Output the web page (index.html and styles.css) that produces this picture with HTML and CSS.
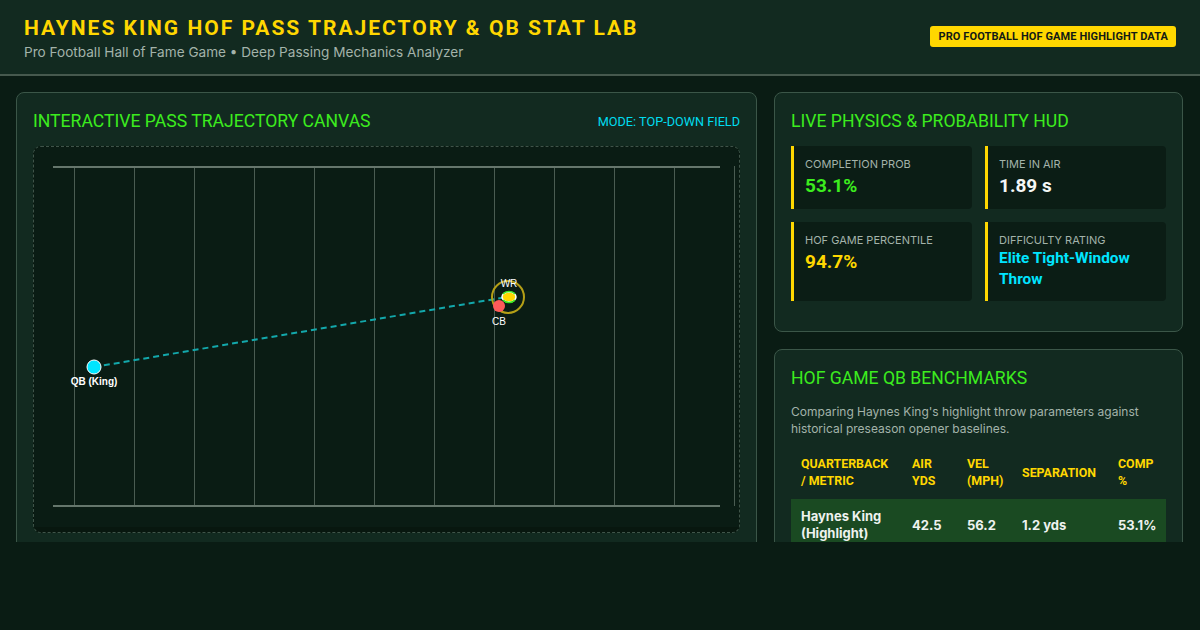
FILE: index.html
```html
<!DOCTYPE html>
<html lang="en">
<head>
<meta charset="utf-8">
<title>Haynes King HOF Pass Trajectory &amp; QB Stat Lab</title>
<link rel="stylesheet" href="styles.css">
</head>
<body>
<header class="top">
  <div class="brand">
    <h1 class="title">HAYNES KING HOF PASS TRAJECTORY &amp; QB STAT LAB</h1>
    <p class="subtitle">Pro Football Hall of Fame Game • Deep Passing Mechanics Analyzer</p>
  </div>
  <span class="badge">PRO FOOTBALL HOF GAME HIGHLIGHT DATA</span>
</header>
<main class="layout">
  <section class="panel canvas-panel">
    <div class="panel-head">
      <h2 class="panel-title">INTERACTIVE PASS TRAJECTORY CANVAS</h2>
      <span class="mode">MODE: TOP-DOWN FIELD</span>
    </div>
    <div class="canvas-box">
      <svg class="field" width="706" height="380" viewBox="0 0 706 380">
        <g stroke="#4a5c52" stroke-width="1">
          <line x1="40.5" y1="19" x2="40.5" y2="359"/>
          <line x1="100.5" y1="19" x2="100.5" y2="359"/>
          <line x1="160.5" y1="19" x2="160.5" y2="359"/>
          <line x1="220.5" y1="19" x2="220.5" y2="359"/>
          <line x1="280.5" y1="19" x2="280.5" y2="359"/>
          <line x1="340.5" y1="19" x2="340.5" y2="359"/>
          <line x1="400.5" y1="19" x2="400.5" y2="359"/>
          <line x1="460.5" y1="19" x2="460.5" y2="359"/>
          <line x1="520.5" y1="19" x2="520.5" y2="359"/>
          <line x1="580.5" y1="19" x2="580.5" y2="359"/>
          <line x1="640.5" y1="19" x2="640.5" y2="359"/>
          <line x1="700.5" y1="19" x2="700.5" y2="359"/>
        </g>
        <g stroke="#65766c" stroke-width="2">
          <line x1="19" y1="20" x2="686" y2="20"/>
          <line x1="19" y1="359" x2="686" y2="359"/>
        </g>
        <line x1="60" y1="220" x2="473" y2="150" stroke="#13a8ab" stroke-width="2" stroke-dasharray="6 4"/>
        <circle cx="474" cy="150" r="16" fill="none" stroke="#b49f16" stroke-width="2"/>
        <ellipse cx="475" cy="150" rx="7" ry="5" fill="#ffd700" stroke="#ffffff" stroke-width="1.5"/>
        <path d="M469 147 A7 5 0 0 1 481 147" fill="none" stroke="#39e61a" stroke-width="1.5"/>
        <path d="M469 153 A7 5 0 0 0 481 153" fill="none" stroke="#39e61a" stroke-width="1.5"/>
        <circle cx="465" cy="159" r="6" fill="#ff5a5a"/>
        <circle cx="60" cy="220" r="7" fill="#00e5ff" stroke="#ffffff" stroke-width="1"/>
        <g class="lbl">
          <text x="475" y="140" text-anchor="middle">WR</text>
          <text x="465" y="178" text-anchor="middle">CB</text>
          <text class="qb" x="60" y="238" text-anchor="middle">QB (King)</text>
        </g>
      </svg>
    </div>
  </section>
  <div class="side">
    <section class="panel">
      <h2 class="panel-title">LIVE PHYSICS &amp; PROBABILITY HUD</h2>
      <div class="stats">
        <div class="stat">
          <div class="stat-label">COMPLETION PROB</div>
          <div class="stat-value green">53.1%</div>
        </div>
        <div class="stat">
          <div class="stat-label">TIME IN AIR</div>
          <div class="stat-value white">1.89 s</div>
        </div>
        <div class="stat">
          <div class="stat-label">HOF GAME PERCENTILE</div>
          <div class="stat-value yellow">94.7%</div>
        </div>
        <div class="stat">
          <div class="stat-label">DIFFICULTY RATING</div>
          <div class="stat-value cyan small">Elite Tight-Window Throw</div>
        </div>
      </div>
    </section>
    <section class="panel">
      <h2 class="panel-title">HOF GAME QB BENCHMARKS</h2>
      <p class="desc">Comparing Haynes King's highlight throw parameters against historical preseason opener baselines.</p>
      <table class="bench">
        <colgroup>
          <col class="c1"><col class="c2"><col class="c3"><col class="c4"><col class="c5">
        </colgroup>
        <thead>
          <tr><th>QUARTERBACK / METRIC</th><th>AIR YDS</th><th>VEL (MPH)</th><th>SEPARATION</th><th>COMP %</th></tr>
        </thead>
        <tbody>
          <tr class="hl"><td>Haynes King (Highlight)</td><td>42.5</td><td>56.2</td><td>1.2 yds</td><td>53.1%</td></tr>
        </tbody>
      </table>
    </section>
  </div>
</main>
</body>
</html>
```
FILE: styles.css
```css
* { box-sizing: border-box; }
html, body { margin: 0; padding: 0; }
body {
  background: #0a1c14;
  font-family: Inter, "Noto Sans", sans-serif;
  color: #e8eee9;
  width: 1200px;
  height: 630px;
  overflow: hidden;
}
.top {
  background: #122a20;
  border-bottom: 2px solid #46594e;
  height: 76px;
  padding: 15px 24px 0 24px;
  display: flex;
  justify-content: space-between;
  align-items: flex-start;
}
.title {
  margin: 0;
  font-family: Roboto, sans-serif;
  font-weight: 700;
  font-size: 21px;
  line-height: 26px;
  letter-spacing: 2px;
  color: #ffd700;
}
.subtitle {
  margin: 2px 0 0 0;
  font-size: 13.6px;
  line-height: 18px;
  color: #a3b3aa;
}
.badge {
  margin-top: 11px;
  background: #ffd700;
  color: #121a14;
  font-family: Roboto, sans-serif;
  font-weight: 700;
  font-size: 11px;
  line-height: 21px;
  height: 21px;
  padding: 0 8px;
  letter-spacing: 0.1px;
  border-radius: 3px;
}
.layout {
  height: 466px;
  overflow: hidden;
  padding: 16px 16px 0 16px;
  display: grid;
  grid-template-columns: 741px 409px;
  column-gap: 17px;
  align-items: start;
}
.panel {
  background: #122a20;
  border: 1px solid #3b5648;
  border-radius: 8px;
  padding: 16px;
}
.panel-head {
  display: flex;
  justify-content: space-between;
  align-items: center;
}
.panel-title {
  margin: 0 0 13px 0;
  font-family: Roboto, sans-serif;
  font-weight: 400;
  font-size: 17.6px;
  line-height: 24px;
  color: #3cec1e;
}
.mode {
  font-family: Roboto, sans-serif;
  font-size: 12.7px;
  color: #00dcef;
  margin-bottom: 13px;
}
.canvas-box {
  border: 1px dashed #3f5449;
  border-radius: 8px;
  background: #08170f;
  padding-bottom: 5px;
  overflow: hidden;
}
.field { display: block; background: #0a1c14; }
.lbl text {
  font-family: "Liberation Sans", Arial, sans-serif;
  font-size: 10px;
  fill: #ffffff;
}
.lbl .qb { font-weight: 700; stroke: #0a1c14; stroke-width: 0.6px; paint-order: stroke; }
.side {
  display: flex;
  flex-direction: column;
  gap: 17px;
}
.stats {
  display: grid;
  grid-template-columns: 1fr 1fr;
  gap: 13px;
  margin-bottom: 14px;
}
.stat {
  background: #0b1d15;
  border-left: 3px solid #ffd700;
  border-radius: 0 4px 4px 0;
  padding: 11px 12px 11px 11px;
}
.stat-label {
  font-size: 11px;
  line-height: 14px;
  color: #a3b3aa;
  margin-bottom: 3px;
}
.stat-value {
  font-family: Roboto, sans-serif;
  font-weight: 700;
  font-size: 19px;
  line-height: 24px;
}
.stat-value.small { font-size: 15.4px; line-height: 21px; margin-top: -2px; }
.green { color: #3cec1e; }
.white { color: #f4f7f5; }
.yellow { color: #ffd700; }
.cyan { color: #00e5ff; }
.desc {
  margin: 0 0 8px 0;
  font-size: 12px;
  line-height: 17px;
  color: #a3b3aa;
}
.bench {
  width: 375px;
  border-collapse: collapse;
  table-layout: fixed;
}
.c1 { width: 111px; }
.c2 { width: 55px; }
.c3 { width: 55px; }
.c4 { width: 96px; }
.c5 { width: 58px; }
.bench th {
  text-align: left;
  font-family: Roboto, sans-serif;
  font-weight: 700;
  font-size: 12.4px;
  line-height: 17px;
  color: #ffd700;
  padding: 10px 10px;
}
.bench td {
  font-size: 13px;
  font-weight: 700;
  line-height: 17px;
  color: #eef2ef;
  padding: 9px 10px;
}
.bench .hl { background: #1a4a22; }
```
